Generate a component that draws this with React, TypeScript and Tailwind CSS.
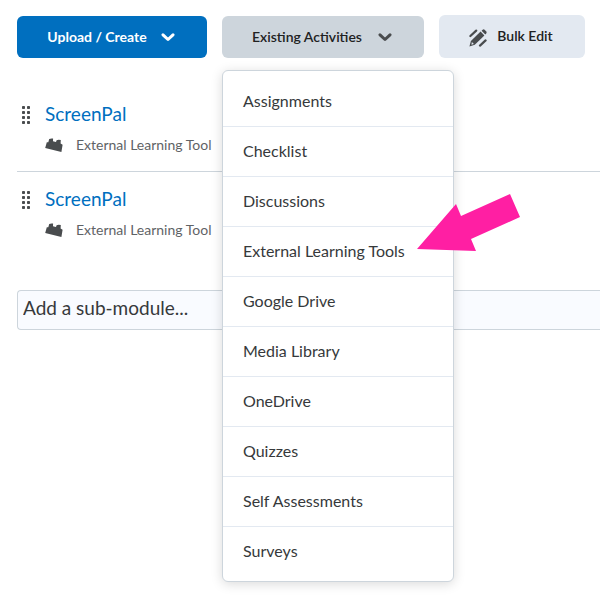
import React from 'react';

const activities = [
  'Assignments',
  'Checklist',
  'Discussions',
  'External Learning Tools',
  'Google Drive',
  'Media Library',
  'OneDrive',
  'Quizzes',
  'Self Assessments',
  'Surveys',
];

const topics = [
  { id: 1, title: 'ScreenPal', type: 'External Learning Tool' },
  { id: 2, title: 'ScreenPal', type: 'External Learning Tool' },
];

function Chevron() {
  return (
    <svg className="h-[10px] w-[14px]" viewBox="0 0 14 10" fill="none" stroke="currentColor" strokeWidth="3" strokeLinecap="round" strokeLinejoin="round" aria-hidden="true">
      <path d="M2 2.8 7 7.5 12 2.8" />
    </svg>
  );
}

function BulkEditIcon() {
  return (
    <svg className="mt-1 h-[18px] w-[18px] text-[#494c4e]" viewBox="0 0 18 18" fill="currentColor" aria-hidden="true">
      <path d="M.4 17.6 1.9 12 11.6 2.6 15.4 6.4 5.8 15.8Z" />
      <path d="M12.6 1.7 13.6.8Q14.5 0 15.6.7L17.3 2.4Q18 3.4 17.3 4.3L16.3 5.4Z" />
      <path d="M2.9 12.9 4.9 14.9 2.4 15.7Z" fill="#e3e9f1" />
      <path d="M1.4 7 7.2 1.6M11 16.6 16.6 11.4" stroke="currentColor" strokeWidth="2.2" strokeLinecap="round" />
    </svg>
  );
}

function DragHandle() {
  return (
    <svg className="mt-1 h-[18px] w-[9px] text-[#494c4e]" viewBox="0 0 9 18" fill="currentColor" aria-hidden="true">
      {[0, 5, 10, 15].map((y) => (
        <React.Fragment key={y}>
          <rect x="0" y={y} width="3" height="3" rx="0.8" />
          <rect x="5" y={y} width="3" height="3" rx="0.8" />
        </React.Fragment>
      ))}
    </svg>
  );
}

function BrickIcon() {
  return (
    <svg className="h-[14px] w-[18px] text-[#494c4e]" viewBox="0 0 18 14" fill="currentColor" aria-hidden="true">
      <path d="M1.8 4.2 3.3 4.2 4.2 1.1Q6 0 8.1.6L8 3.2 11 4 11.6 2.2Q13.5 1.2 15.8 2.1L15.6 5.4 17.6 6.8 16.4 14 .2 9.9Z" />
    </svg>
  );
}

export default function App() {
  return (
    <main className="min-h-screen overflow-x-hidden bg-white pt-[15px] pb-4 pl-[17px] font-['Lato',sans-serif] text-[#494c4e]">
      <div className="flex items-end text-sm font-bold">
        <button type="button" className="flex h-[42px] w-[190px] items-center justify-center gap-[14px] rounded-md bg-[#006fbf] pr-[2px] pb-px text-white">
          Upload / Create
          <Chevron />
        </button>

        <div className="relative ml-[15px]">
          <button type="button" aria-haspopup="menu" aria-expanded="true" className="flex h-[42px] w-[202px] items-center justify-center gap-4 rounded-md bg-[#cdd5dc] pr-[2px] pb-px font-semibold text-[#202122]">
            Existing Activities
            <span className="text-[#494c4e]"><Chevron /></span>
          </button>

          <ul role="menu" className="absolute top-full left-0 z-10 mt-3 w-[232px] rounded-md border border-[#cdd5dc] bg-white py-[5px] text-base font-normal text-[#36393b] shadow-[0_2px_12px_rgba(0,0,0,0.15)]">
            {activities.map((name) => (
              <li key={name} role="none" className="h-[50px] border-t border-[#e3e9f1] first:border-transparent">
                <button type="button" role="menuitem" className="flex h-full w-full items-center px-5 pb-[2px] text-left">
                  {name}
                </button>
              </li>
            ))}
          </ul>

          <svg className="absolute top-[178px] left-[195px] z-20 h-[58px] w-[104px]" viewBox="0 0 104 58" fill="#ff1fa3" aria-hidden="true">
            <path d="M0 55 39 10 44 22 93 0 103 23 54 45 59 57Z" />
          </svg>
        </div>

        <button type="button" className="ml-[15px] flex h-[43px] w-[146px] items-center justify-center gap-[10px] rounded-md bg-[#e3e9f1] pr-[2px] pb-[2px] font-semibold text-[#202122]">
          <BulkEditIcon />
          Bulk Edit
        </button>
      </div>

      <ul className="mt-[29px]">
        {topics.map((topic) => (
          <li key={topic.id} className="flex h-[85px] gap-[14px] border-b border-[#cdd5dc] pt-[15px] pl-[5px] last:border-b-0">
            <DragHandle />
            <div>
              <a href="#topic" className="block text-[19px] leading-6 text-[#006fbf]">{topic.title}</a>
              <div className="mt-[9px] flex items-center gap-[13px] text-sm leading-5 text-[#5f6366]">
                <BrickIcon />
                {topic.type}
              </div>
            </div>
          </li>
        ))}
      </ul>

      <input
        type="text"
        aria-label="Add a sub-module"
        placeholder="Add a sub-module..."
        className="mt-[33px] block h-10 w-full rounded-l border border-r-0 border-[#cdd5dc] bg-[#f9fbff] px-[5px] pb-[6px] text-[19px] placeholder:text-[#36393b]"
      />
    </main>
  );
}
